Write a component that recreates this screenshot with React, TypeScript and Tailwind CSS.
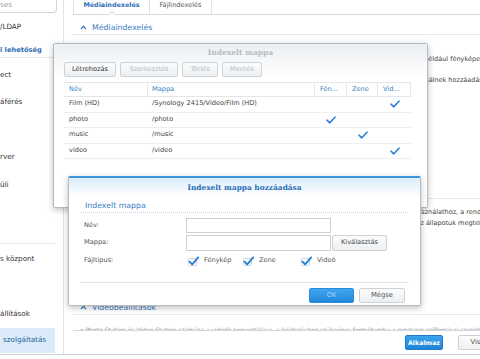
import React from "react";

const Check = () => (
  <svg width="10" height="8" viewBox="0 0 10 8" className="block">
    <path d="M1 4.2 L3.8 6.8 L9 1.2" fill="none" stroke="#2a80d2" strokeWidth="1.6" strokeLinecap="round" strokeLinejoin="round" />
  </svg>
);

const BoxCheck = () => (
  <svg width="11" height="10" viewBox="0 0 11 10" className="block">
    <rect x="0.5" y="2.5" width="8" height="7" rx="1" fill="#fff" stroke="#c9d0d7" />
    <path d="M1.6 5.6 L4.2 8.4 L10.2 1.4" fill="none" stroke="#1f7fd6" strokeWidth="1.8" strokeLinecap="round" strokeLinejoin="round" />
  </svg>
);

const Chevron = () => (
  <svg width="7" height="5" viewBox="0 0 7 5" className="block">
    <path d="M1 4.2 L3.5 1.3 L6 4.2" fill="none" stroke="#3a7cc4" strokeWidth="1.3" />
  </svg>
);

const rows = [
  { name: "Film (HD)", path: "/Synology 2415/Video/Film (HD)", col: 2 },
  { name: "photo", path: "/photo", col: 0 },
  { name: "music", path: "/music", col: 1 },
  { name: "video", path: "/video", col: 2 },
];

function Sidebar() {
  return (
    <aside className="flex w-[64px] shrink-0 flex-col border-r border-[#e1e5e9] text-[7.2px] whitespace-nowrap">
      <div className="h-[13px] w-[57px] rounded-br-[4px] border-b border-r border-[#cfd4d9] leading-[10px] text-[#9aa1a8]">ses</div>
      <div className="flex h-[28px] items-center">/LDAP</div>
      <div className="h-[17px] w-[55px] border-b border-[#e6e9ec] pt-[3px] text-[6.7px] font-bold leading-[13px] text-[#2f6db5]">i lehetőség</div>
      <div className="flex h-[34px] items-center">ect</div>
      <div className="flex h-[20px] items-center">áférés</div>
      <div className="h-[31px]"></div>
      <div className="flex h-[28px] items-center">rver</div>
      <div className="flex h-[28px] items-center">üli</div>
      <div className="h-[45px] w-[55px] border-b border-[#e6e9ec]"></div>
      <div className="flex h-[30px] items-center">s központ</div>
      <div className="h-[27px]"></div>
      <div className="flex h-[27px] items-center">állítások</div>
      <div className="flex h-[25px] w-[55px] items-center bg-[#dcebf9] pl-[3px] text-[#1f5f9f]">szolgáltatás</div>
    </aside>
  );
}

function Main() {
  return (
    <main className="flex w-[450px] shrink-0 flex-col">
      <div className="ml-[9px] flex h-[15px] border-b border-[#d3d8dd]">
        <div className="relative flex w-[77px] items-center justify-center border-x border-[#dfe3e7] pb-[4px] text-[6.4px] font-bold leading-none text-[#2d6fb7]">
          Médiaindexelés
          <span className="absolute bottom-[-3px] left-1/2 h-[5px] w-[5px] -translate-x-1/2 rotate-45 border-l border-t border-[#d3d8dd] bg-white"></span>
        </div>
        <div className="flex w-[62px] items-center justify-center border-r border-[#dfe3e7] pb-[4px] text-[6.6px] leading-none text-[#555]">
          Fájlindexelés
        </div>
      </div>

      <div className="h-[315px] overflow-hidden pl-[9px] text-[6.5px] whitespace-nowrap text-[#444]">
        <div className="mt-[6px] flex h-[14px] items-center gap-[5px] border-b border-dotted border-[#c9d0d6] pl-[7px] text-[7.8px] text-[#3a7cc4]">
          <Chevron />
          Médiaindexelés
        </div>
        <div className="mt-[19px] pl-[7px] leading-[10px]">
          A médiaindexelés automatikusan felismeri és indexeli a multimédiás fájlokat, melyek mappában vannak, például fényképeket, zenéket és videókat.
        </div>
        <div className="mt-[11px] pl-[7px] leading-[10px]">
          Az indexelt mappák listájának kezeléséhez kattintson a Indexelt mappa gombra, és adja meg médiakiszolgálnek hozzáadásához.
        </div>
        <div className="mt-[100px] flex h-[14px] items-center gap-[5px] border-b border-dotted border-[#c9d0d6] pl-[7px] text-[7.8px] text-[#3a7cc4]">
          <Chevron />
          Fényképbeállítások
        </div>
        <div className="mt-[8px] pl-[7px] leading-[11px]">
          Módosíthatja a miniatűrök minőségét, amelyeket a rendszer a Photo Station és a File Station számára használathoz, a rendszer erőforrásai szerint.
        </div>
        <div className="pl-[7px] leading-[11px]">
          A miniatűrök és videók konvertálásának előrehaladását, valamint a folyamatban lévő új feladatokat és az állapotuk megtekintéséhez kattintson ide.
        </div>
        <div className="mt-[72px] flex h-[14px] items-center gap-[5px] border-b border-dotted border-[#c9d0d6] pl-[7px] text-[7.8px] text-[#3a7cc4]">
          <Chevron />
          Videobeállítások
        </div>
        <div className="mt-[10px] pl-[7px] text-[6px] leading-[10px] text-[#8d949a]">
          • Photo Station és Video Station számára a videók konvertálása, a lejátszáshoz szükséges formátumba a rendszer erőforrásai szerint történik
        </div>
      </div>

      <div className="ml-[9px] flex h-[24px] items-center justify-end gap-[15px] border-t border-[#d3d8dd] pr-[10px]">
        <button className="flex h-[15px] w-[38px] items-center justify-center rounded-[2px] border border-[#1f7ccc] bg-linear-to-b from-[#3aa2ee] to-[#1d84d6] text-[6.3px] font-bold text-white">
          Alkalmaz
        </button>
        <button className="flex h-[15px] w-[46px] items-center justify-center rounded-[2px] border border-[#cdd2d7] bg-linear-to-b from-[#fbfcfc] to-[#eef0f2] text-[6.8px] text-[#555]">
          Vissza
        </button>
      </div>
    </main>
  );
}

function IndexDialog() {
  const btn = "flex h-[15px] items-center justify-center rounded-[2px] border border-[#cfd4d9] bg-linear-to-b from-[#fbfcfc] to-[#eceff2] text-[6.6px]";
  return (
    <div className="absolute left-[53px] top-[43px] h-[165px] w-[375px] rounded-[2px] border border-[#b3bac1] bg-white shadow-[0_2px_6px_rgba(0,0,0,0.25)]">
      <div className="bg-linear-to-b from-[#eceff2] to-white">
        <div className="flex h-[18px] items-center justify-center font-['DejaVu_Serif',serif] text-[7.5px] font-bold text-[#b4bcc5]">
          Indexelt mappa
        </div>
        <div className="flex h-[15px] gap-[4px] pl-[10px]">
          <button className={`${btn} w-[52px] text-[#333]`}>Létrehozás</button>
          <button className={`${btn} w-[58px] text-[#b5bcc4]`}>Szerkesztés</button>
          <button className={`${btn} w-[36px] text-[#b5bcc4]`}>Törlés</button>
          <button className={`${btn} w-[40px] text-[#b5bcc4]`}>Mentés</button>
        </div>
      </div>
      <div className="ml-[10px] mt-[5px] w-[347px] text-[6.6px]">
        <div className="grid h-[15px] grid-cols-[84px_167px_32px_31px_33px] border-y border-[#e3e6e9] text-[#3d7fc0]">
          <div className="flex items-center border-r border-[#e3e6e9] pl-[5px]">Név</div>
          <div className="flex items-center border-r border-[#e3e6e9] pl-[4px]">Mappa</div>
          <div className="flex items-center border-r border-[#e3e6e9] pl-[5px]">Fén...</div>
          <div className="flex items-center border-r border-[#e3e6e9] pl-[5px]">Zene</div>
          <div className="flex items-center border-r border-[#e3e6e9] pl-[5px]">Vid...</div>
        </div>
        {rows.map((r) => (
          <div key={r.name} className="grid h-[15.5px] grid-cols-[84px_167px_32px_31px_33px] border-b border-[#eceef0] text-[#444]">
            <div className="flex items-center pl-[5px]">{r.name}</div>
            <div className="flex items-center pl-[4px]">{r.path}</div>
            {[0, 1, 2].map((c) => (
              <div key={c} className="flex items-center justify-center">
                {r.col === c && <Check />}
              </div>
            ))}
          </div>
        ))}
      </div>
    </div>
  );
}

function AddDialog() {
  return (
    <div className="absolute left-[68px] top-[176px] h-[130px] w-[353px] rounded-[2px] border border-t-2 border-[#b4bbc2] border-t-[#3c98dd] bg-white text-[6.6px] text-[#555] shadow-[0_2px_6px_rgba(0,0,0,0.25)]">
      <div className="flex h-[19px] items-center justify-center bg-linear-to-b from-[#dcedfa] to-white font-['DejaVu_Serif',serif] text-[7.4px] font-bold text-[#2a6db5]">
        Indexelt mappa hozzáadása
      </div>
      <div className="mx-[12px] mt-[3px] flex h-[13px] items-center border-b border-dotted border-[#c9d0d6] pl-[4px] text-[7.8px] text-[#3a7cc4]">
        Indexelt mappa
      </div>
      <div className="pl-[15px]">
        <div className="mt-[5px] flex h-[15px] items-center">
          <span className="w-[102px]">Név:</span>
          <div className="h-[15px] w-[145px] border border-[#cbd0d5] bg-white"></div>
        </div>
        <div className="mt-[2px] flex h-[16px] items-center">
          <span className="w-[102px]">Mappa:</span>
          <div className="h-[16px] w-[145px] border border-[#cbd0d5] bg-white"></div>
          <button className="ml-[1px] flex h-[16px] w-[55px] items-center justify-center rounded-[2px] border border-[#cdd2d7] bg-linear-to-b from-[#fbfcfc] to-[#eceff2] text-[#444]">
            Kiválasztás
          </button>
        </div>
        <div className="mt-[4px] flex h-[12px] items-center">
          <span className="w-[102px]">Fájltipus:</span>
          <div className="flex w-[57px] items-center gap-[5px] pl-[2px]">
            <BoxCheck />
            Fénykép
          </div>
          <div className="flex w-[58px] items-center gap-[5px]">
            <BoxCheck />
            Zene
          </div>
          <div className="flex items-center gap-[5px]">
            <BoxCheck />
            Videó
          </div>
        </div>
      </div>
      <div className="mx-[11px] mt-[15px] border-t border-[#e1e5e9]"></div>
      <div className="mt-[5px] flex h-[15px] justify-end gap-[5px] pr-[15px]">
        <button className="flex w-[45px] items-center justify-center rounded-[2px] border border-[#2a8ae0] bg-linear-to-b from-[#41a6f0] to-[#1f87d9] text-[#a8d4f6]">
          OK
        </button>
        <button className="flex w-[46px] items-center justify-center rounded-[2px] border border-[#cdd2d7] bg-linear-to-b from-[#fbfcfc] to-[#eceff2] text-[6.8px] text-[#555]">
          Mégse
        </button>
      </div>
    </div>
  );
}

export default function App() {
  return (
    <div className="relative h-[359px] w-[480px] overflow-hidden bg-white font-['DejaVu_Sans',sans-serif] text-[#333]">
      <div className="flex h-[355px] border-b border-[#cdd2d7]">
        <Sidebar />
        <Main />
      </div>
      <IndexDialog />
      <AddDialog />
    </div>
  );
}
